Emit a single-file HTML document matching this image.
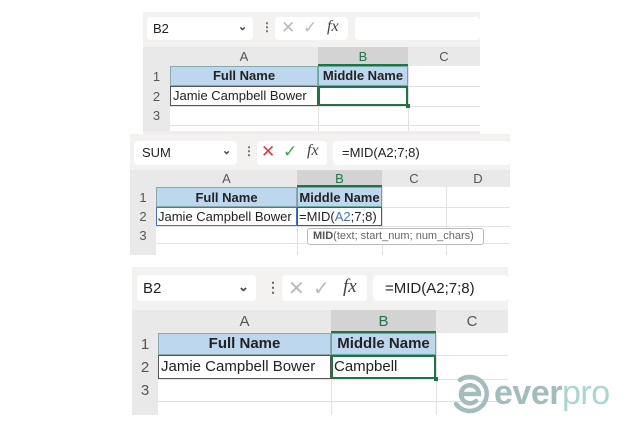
<!DOCTYPE html>
<html><head><meta charset="utf-8"><style>
*{margin:0;padding:0;box-sizing:border-box}
body{width:640px;height:427px;background:#fff;position:relative;overflow:hidden;font-family:"Liberation Sans",sans-serif;color:#222}
.a{position:absolute}
.tb{background:#f3f2f1}
.box{background:#fff;border-radius:4px}
.hd{background:#e9e9e9;color:#555;text-align:center}
.hdb{background:#d3d3d3;color:#217346;text-align:center;border-bottom:2px solid #217346}
.gl{background:#e1e1e1}
.sel{background:#bdd7ee}
.t{white-space:nowrap}
</style></head><body>

<!-- PANEL 1 -->
<div class="a tb" style="left:143px;top:12px;width:337px;height:35px"></div>
<div class="a box" style="left:147px;top:17px;width:106px;height:23px"></div>
<div class="a t" style="left:153px;top:21px;font-size:13px">B2</div>
<div class="a t" style="left:238px;top:20px;font-size:11px;font-weight:bold;color:#444">&#8964;</div>
<div class="a t" style="left:261px;top:20px;font-size:12px;color:#666;font-weight:bold">&#8942;</div>
<div class="a box" style="left:275px;top:17px;width:73px;height:23px"></div>
<div class="a t" style="left:281px;top:18px;font-size:17px;color:#bbb">&#10005;</div>
<div class="a t" style="left:303px;top:18px;font-size:17px;color:#bbb">&#10003;</div>
<div class="a t" style="left:327px;top:18px;font-size:16px;font-style:italic;font-family:'Liberation Serif',serif;color:#444">fx</div>
<div class="a box" style="left:355px;top:17px;width:125px;height:23px"></div>

<div class="a hd" style="left:143px;top:47px;width:337px;height:19px"></div>
<div class="a hd t" style="left:170px;top:49px;width:148px;font-size:13px;background:none">A</div>
<div class="a hdb t" style="left:318px;top:47px;width:90px;height:19px;font-size:13px;padding-top:2px">B</div>
<div class="a hd t" style="left:408px;top:49px;width:72px;font-size:13px;background:none">C</div>
<div class="a" style="left:143px;top:66px;width:27px;height:67px;background:#e9e9e9"></div>
<div class="a t" style="left:143px;top:69px;width:27px;text-align:center;font-size:13px;color:#555">1</div>
<div class="a t" style="left:143px;top:89px;width:27px;text-align:center;font-size:13px;color:#555">2</div>
<div class="a t" style="left:143px;top:108px;width:27px;text-align:center;font-size:13px;color:#555">3</div>
<div class="a gl" style="left:170px;top:106px;width:310px;height:1px"></div>
<div class="a gl" style="left:170px;top:125px;width:310px;height:1px"></div>
<div class="a gl" style="left:318px;top:66px;width:1px;height:67px"></div>
<div class="a gl" style="left:408px;top:66px;width:1px;height:67px"></div>
<div class="a gl" style="left:170px;top:86px;width:310px;height:1px"></div>
<div class="a sel" style="left:170px;top:66px;width:148px;height:20px;border:1px solid #8aa"></div>
<div class="a sel" style="left:318px;top:66px;width:90px;height:20px;border:1px solid #6a9"></div>
<div class="a t" style="left:170px;top:68px;width:148px;text-align:center;font-size:13px;font-weight:bold">Full Name</div>
<div class="a t" style="left:318px;top:68px;width:90px;text-align:center;font-size:13px;font-weight:bold">Middle Name</div>
<div class="a" style="left:170px;top:86px;width:148px;height:20px;border:1px solid #555"></div>
<div class="a t" style="left:173px;top:88px;font-size:13px">Jamie Campbell Bower</div>
<div class="a" style="left:318px;top:86px;width:90px;height:20px;border:2px solid #217346"></div>
<div class="a" style="left:406px;top:104px;width:4px;height:4px;background:#217346"></div>
<div class="a" style="left:143px;top:131px;width:337px;height:3px;background:#f0eeec"></div>

<!-- PANEL 2 -->
<div class="a tb" style="left:130px;top:134px;width:380px;height:36px"></div>
<div class="a box" style="left:134px;top:141px;width:103px;height:24px"></div>
<div class="a t" style="left:142px;top:145px;font-size:13px">SUM</div>
<div class="a t" style="left:222px;top:144px;font-size:11px;font-weight:bold;color:#444">&#8964;</div>
<div class="a t" style="left:243px;top:144px;font-size:12px;color:#666;font-weight:bold">&#8942;</div>
<div class="a box" style="left:257px;top:141px;width:70px;height:24px"></div>
<div class="a t" style="left:261px;top:142px;font-size:17px;color:#e0383e">&#10005;</div>
<div class="a t" style="left:283px;top:142px;font-size:17px;color:#3aa655">&#10003;</div>
<div class="a t" style="left:307px;top:142px;font-size:16px;font-style:italic;font-family:'Liberation Serif',serif;color:#444">fx</div>
<div class="a box" style="left:333px;top:141px;width:177px;height:24px"></div>
<div class="a t" style="left:342px;top:145px;font-size:13px">=MID(A2;7;8)</div>

<div class="a hd" style="left:130px;top:170px;width:380px;height:17px"></div>
<div class="a t" style="left:156px;top:171px;width:141px;text-align:center;font-size:13px;color:#555">A</div>
<div class="a hdb t" style="left:297px;top:170px;width:85px;height:17px;font-size:13px;padding-top:1px">B</div>
<div class="a t" style="left:382px;top:171px;width:64px;text-align:center;font-size:13px;color:#555">C</div>
<div class="a t" style="left:446px;top:171px;width:64px;text-align:center;font-size:13px;color:#555">D</div>
<div class="a" style="left:130px;top:187px;width:26px;height:68px;background:#e9e9e9"></div>
<div class="a t" style="left:130px;top:190px;width:26px;text-align:center;font-size:13px;color:#555">1</div>
<div class="a t" style="left:130px;top:209px;width:26px;text-align:center;font-size:13px;color:#555">2</div>
<div class="a t" style="left:130px;top:228px;width:26px;text-align:center;font-size:13px;color:#555">3</div>
<div class="a gl" style="left:156px;top:207px;width:354px;height:1px"></div>
<div class="a gl" style="left:156px;top:226px;width:354px;height:1px"></div>
<div class="a gl" style="left:156px;top:243px;width:354px;height:1px"></div>
<div class="a gl" style="left:297px;top:187px;width:1px;height:68px"></div>
<div class="a gl" style="left:382px;top:187px;width:1px;height:68px"></div>
<div class="a gl" style="left:446px;top:187px;width:1px;height:68px"></div>
<div class="a sel" style="left:156px;top:187px;width:141px;height:20px;border:1px solid #8aa"></div>
<div class="a sel" style="left:297px;top:187px;width:85px;height:20px;border:1px solid #6a9"></div>
<div class="a t" style="left:156px;top:190px;width:141px;text-align:center;font-size:13px;font-weight:bold">Full Name</div>
<div class="a t" style="left:297px;top:190px;width:85px;text-align:center;font-size:13px;font-weight:bold">Middle Name</div>
<div class="a" style="left:156px;top:207px;width:141px;height:19px;border:1px solid #4472c4;background:#fff"></div>
<div class="a t" style="left:158px;top:209px;font-size:13px">Jamie Campbell Bower</div>
<div class="a" style="left:297px;top:207px;width:85px;height:19px;border:1px solid #217346;background:#fff"></div>
<div class="a t" style="left:299px;top:209px;font-size:13px">=MID(<span style="color:#4472c4">A2</span>;7;8)</div>
<div class="a" style="left:307px;top:228px;width:177px;height:17px;border:1px solid #bbb;border-radius:3px;background:#fff"></div>
<div class="a t" style="left:313px;top:230px;font-size:11px;color:#666"><b style="color:#555">MID</b>(text; start_num; num_chars)</div>

<!-- PANEL 3 -->
<div class="a tb" style="left:132px;top:267px;width:376px;height:43px"></div>
<div class="a box" style="left:137px;top:275px;width:119px;height:26px"></div>
<div class="a t" style="left:143px;top:280px;font-size:15px">B2</div>
<div class="a t" style="left:238px;top:279px;font-size:13px;font-weight:bold;color:#444">&#8964;</div>
<div class="a t" style="left:266px;top:279px;font-size:14px;color:#666;font-weight:bold">&#8942;</div>
<div class="a box" style="left:282px;top:275px;width:85px;height:26px"></div>
<div class="a t" style="left:288px;top:276px;font-size:20px;color:#bbb">&#10005;</div>
<div class="a t" style="left:313px;top:276px;font-size:20px;color:#bbb">&#10003;</div>
<div class="a t" style="left:343px;top:276px;font-size:19px;font-style:italic;font-family:'Liberation Serif',serif;color:#444">fx</div>
<div class="a box" style="left:373px;top:275px;width:135px;height:26px"></div>
<div class="a t" style="left:385px;top:280px;font-size:15px">=MID(A2;7;8)</div>

<div class="a hd" style="left:132px;top:310px;width:376px;height:23px"></div>
<div class="a t" style="left:158px;top:313px;width:173px;text-align:center;font-size:15px;color:#555">A</div>
<div class="a hdb t" style="left:331px;top:310px;width:105px;height:23px;font-size:15px;padding-top:3px">B</div>
<div class="a t" style="left:436px;top:313px;width:72px;text-align:center;font-size:15px;color:#555">C</div>
<div class="a" style="left:132px;top:333px;width:26px;height:82px;background:#e9e9e9"></div>
<div class="a t" style="left:132px;top:336px;width:26px;text-align:center;font-size:15px;color:#555">1</div>
<div class="a t" style="left:132px;top:359px;width:26px;text-align:center;font-size:15px;color:#555">2</div>
<div class="a t" style="left:132px;top:382px;width:26px;text-align:center;font-size:15px;color:#555">3</div>
<div class="a gl" style="left:158px;top:355px;width:350px;height:1px"></div>
<div class="a gl" style="left:158px;top:379px;width:350px;height:1px"></div>
<div class="a gl" style="left:158px;top:401px;width:350px;height:1px"></div>
<div class="a gl" style="left:331px;top:333px;width:1px;height:82px"></div>
<div class="a gl" style="left:436px;top:333px;width:1px;height:82px"></div>
<div class="a sel" style="left:158px;top:333px;width:173px;height:22px;border:1px solid #8aa"></div>
<div class="a sel" style="left:331px;top:333px;width:105px;height:22px;border:1px solid #6a9"></div>
<div class="a t" style="left:158px;top:335px;width:173px;text-align:center;font-size:15px;font-weight:bold">Full Name</div>
<div class="a t" style="left:331px;top:335px;width:105px;text-align:center;font-size:15px;font-weight:bold">Middle Name</div>
<div class="a" style="left:158px;top:355px;width:173px;height:24px;border:1px solid #555"></div>
<div class="a t" style="left:161px;top:358px;font-size:15px">Jamie Campbell Bower</div>
<div class="a" style="left:331px;top:355px;width:105px;height:24px;border:2px solid #217346"></div>
<div class="a t" style="left:334px;top:358px;font-size:15px">Campbell</div>
<div class="a" style="left:434px;top:377px;width:4px;height:4px;background:#217346"></div>
<div class="a" style="left:132px;top:415px;width:376px;height:12px;background:#fff"></div>

<!-- LOGO -->
<svg class="a" style="left:450px;top:372px" width="44" height="44" viewBox="0 0 44 44">
<path d="M10 8 A17 17 0 1 1 6 32" fill="none" stroke="#a3bcbc" stroke-width="4.5" stroke-linecap="round"/>
<path d="M11 22 H29 A9 9 0 1 0 26 29" fill="none" stroke="#a3bcbc" stroke-width="4.5" stroke-linecap="round"/>
</svg>
<div class="a t" style="left:494px;top:374px;font-size:34px;font-weight:bold;letter-spacing:-0.5px;color:#a3bcbc">ever<span style="color:#a9d6d1;font-weight:normal">pro</span></div>
</body></html>
